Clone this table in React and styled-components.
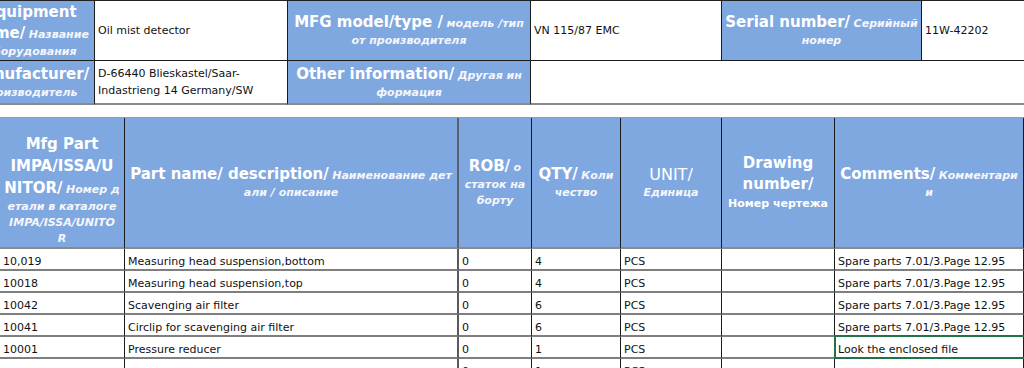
import React from "react";
import styled, { createGlobalStyle } from "styled-components";

const GlobalStyle = createGlobalStyle`
  html, body {
    margin: 0;
    padding: 0;
    background: #ffffff;
  }
  body {
    font-family: "DejaVu Sans", "Liberation Sans", sans-serif;
  }
`;

const BLUE = "#80a8e0";

const Sheet = styled.div`
  width: 1024px;
  height: 368px;
  overflow: hidden;
  background: #fff;
`;

const InfoGrid = styled.div`
  display: grid;
  grid-template-columns: 95px 193px 243px 191px 200px 102px;
  grid-template-rows: 60px 44px;
  border-top: 1px solid #222;
  box-sizing: border-box;
`;

const LabelCell = styled.div`
  background: ${BLUE};
  color: #fff;
  display: flex;
  align-items: center;
  justify-content: ${(p) => (p.$clip ? "flex-start" : "center")};
  text-align: center;
  overflow: hidden;
  white-space: nowrap;
  line-height: 15px;
  font-size: 11px;
  box-sizing: border-box;
  border-right: 1px solid #1a1a1a;
  border-bottom: ${(p) => (p.$last ? "2px solid #8a8a8a" : "1px solid #1a1a1a")};
`;

const ClipBlock = styled.div`
  flex-shrink: 0;
  width: 122px;
  margin-left: ${(p) => p.$shift || "-27px"};
  text-align: center;
`;

const ValueCell = styled.div`
  display: flex;
  align-items: center;
  padding-left: 3px;
  font-size: 11px;
  line-height: 17px;
  color: #111;
  white-space: nowrap;
  overflow: hidden;
  box-sizing: border-box;
  grid-column: ${(p) => p.$span || "auto"};
  border-right: ${(p) => (p.$noRight ? "none" : "1px solid #1a1a1a")};
  border-bottom: ${(p) => (p.$last ? "2px solid #8a8a8a" : "1px solid #1a1a1a")};
`;

const En = styled.span`
  font-weight: bold;
  font-size: 15px;
  line-height: ${(p) => p.$lh || "21px"};
`;

const EnPlain = styled.span`
  font-weight: normal;
  font-size: 16px;
  line-height: 21px;
`;

const Ru = styled.span`
  font-style: italic;
  font-weight: bold;
  font-size: 11px;
  line-height: 16px;
  color: #f4f6fb;
`;

const RuPlain = styled.span`
  font-weight: bold;
  font-size: 11px;
  line-height: 17px;
`;

const Gap = styled.div`
  height: 12px;
`;

const PartsGrid = styled.div`
  display: grid;
  grid-template-columns: 125px 334px 73px 89px 101px 113px 189px;
  grid-template-rows: 131px repeat(6, 22px);
  border-top: 1px solid #9a9a9a;
`;

const HeadCell = styled.div`
  background: ${BLUE};
  color: #fff;
  display: flex;
  align-items: center;
  justify-content: center;
  text-align: center;
  white-space: nowrap;
  overflow: hidden;
  font-size: 11px;
  line-height: 15px;
  box-sizing: border-box;
  padding-top: ${(p) => p.$padTop || "0"};
  border-right: ${(p) => (p.$thick ? "2px solid #5a6170" : "1px solid #1a1a1a")};
  border-bottom: 2px solid #8a8a8a;
`;

const DataCell = styled.div`
  display: flex;
  align-items: flex-end;
  padding: 0 0 0 3px;
  font-size: 11px;
  line-height: 14px;
  color: #111;
  white-space: nowrap;
  box-sizing: border-box;
  position: relative;
  border-right: ${(p) => (p.$thick ? "2px solid #5a5a5a" : "1px solid #1a1a1a")};
  border-bottom: 2px solid #7f7f7f;
  ${(p) =>
    p.$selected &&
    `
    &::after {
      content: "";
      position: absolute;
      left: -1px;
      top: -2px;
      right: -6px;
      bottom: -2px;
      border: 2px solid #217346;
      pointer-events: none;
    }
  `}
`;

const headers = [
  (
    <>
      <En $lh="22px">Mfg Part</En>
      <br />
      <En $lh="22px">IMPA/ISSA/U</En>
      <br />
      <En $lh="22px">NITOR/</En> <Ru>Номер д</Ru>
      <br />
      <Ru>етали в каталоге</Ru>
      <br />
      <Ru>IMPA/ISSA/UNITO</Ru>
      <br />
      <Ru>R</Ru>
    </>
  ),
  (
    <>
      <En>Part name/ description/</En> <Ru>Наименование дет</Ru>
      <br />
      <Ru>али / описание</Ru>
    </>
  ),
  (
    <>
      <En>ROB/</En> <Ru>о</Ru>
      <br />
      <Ru>статок на</Ru>
      <br />
      <Ru>борту</Ru>
    </>
  ),
  (
    <>
      <En>QTY/</En> <Ru>Коли</Ru>
      <br />
      <Ru>чество</Ru>
    </>
  ),
  (
    <>
      <EnPlain>UNIT/</EnPlain>
      <br />
      <Ru>Единица</Ru>
    </>
  ),
  (
    <>
      <En>Drawing</En>
      <br />
      <En>number/</En>
      <br />
      <RuPlain>Номер чертежа</RuPlain>
    </>
  ),
  (
    <>
      <En>Comments/</En> <Ru>Комментари</Ru>
      <br />
      <Ru>и</Ru>
    </>
  ),
];

const rows = [
  ["10,019", "Measuring head suspension,bottom", "0", "4", "PCS", "", "Spare parts 7.01/3.Page 12.95"],
  ["10018", "Measuring head suspension,top", "0", "4", "PCS", "", "Spare parts 7.01/3.Page 12.95"],
  ["10042", "Scavenging air filter", "0", "6", "PCS", "", "Spare parts 7.01/3.Page 12.95"],
  ["10041", "Circlip for scavenging air filter", "0", "6", "PCS", "", "Spare parts 7.01/3.Page 12.95"],
  ["10001", "Pressure reducer", "0", "1", "PCS", "", "Look the enclosed file"],
  ["", "", "0", "1", "PCS", "", ""],
];

export default function App() {
  return (
    <>
      <GlobalStyle />
      <Sheet>
        <InfoGrid>
          <LabelCell $clip>
            <ClipBlock $shift="-30px">
              <En>Equipment</En>
              <br />
              <En>name/</En> <Ru>Название</Ru>
              <br />
              <Ru>оборудования</Ru>
            </ClipBlock>
          </LabelCell>
          <ValueCell>Oil mist detector</ValueCell>
          <LabelCell>
            <div>
              <En>MFG model/type /</En> <Ru>модель /тип</Ru>
              <br />
              <Ru>от производителя</Ru>
            </div>
          </LabelCell>
          <ValueCell>VN 115/87 EMC</ValueCell>
          <LabelCell>
            <div>
              <En>Serial number/</En> <Ru>Серийный</Ru>
              <br />
              <Ru>номер</Ru>
            </div>
          </LabelCell>
          <ValueCell $noRight>11W-42202</ValueCell>

          <LabelCell $clip $last>
            <ClipBlock $shift="-32px">
              <En>Manufacturer/</En>
              <br />
              <Ru>производитель</Ru>
            </ClipBlock>
          </LabelCell>
          <ValueCell $last>
            <div>
              D-66440 Blieskastel/Saar-
              <br />
              Indastrieng 14 Germany/SW
            </div>
          </ValueCell>
          <LabelCell $last>
            <div>
              <En>Other information/</En> <Ru>Другая ин</Ru>
              <br />
              <Ru>формация</Ru>
            </div>
          </LabelCell>
          <ValueCell $last $noRight $span="span 3" />
        </InfoGrid>

        <Gap />

        <PartsGrid>
          {headers.map((h, i) => (
            <HeadCell key={i} $thick={i === 1} $padTop={i === 0 ? "14px" : "0"}>
              <div>{h}</div>
            </HeadCell>
          ))}
          {rows.map((r, ri) =>
            r.map((v, ci) => (
              <DataCell
                key={`${ri}-${ci}`}
                $thick={ci === 1}
                $selected={ri === 4 && ci === 6}
              >
                {v}
              </DataCell>
            ))
          )}
        </PartsGrid>
      </Sheet>
    </>
  );
}
